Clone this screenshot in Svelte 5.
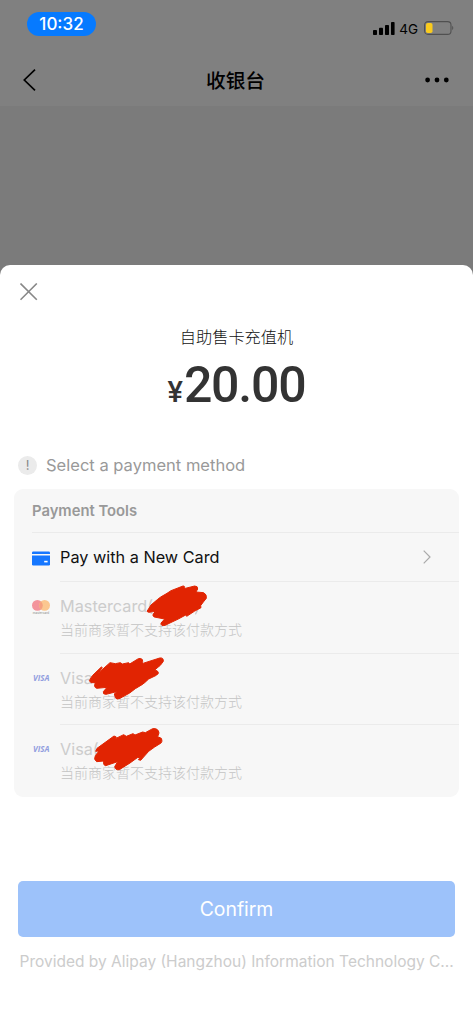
<script lang="ts">
	type Method = {
		brand: 'mastercard' | 'visa';
		name: string;
		mark: string;
	};

	const notice = '当前商家暂不支持该付款方式';

	// Scribbles share a 720x240 canvas drawn at a third of its size
	const methods: Method[] = [
		{
			brand: 'mastercard',
			name: 'Mastercard(',
			mark: 'M381 94 L393 75 L413 58 L422 51 L441 40 L453 32 L489 18 Q497 18 492 26 L524 18 Q534 18 533 27 L528 36 L551 38 Q561 43 559 55 L550 66 L542 77 L543 83 L523 94 L500 109 L497 105 L475 117 L435 136 Q422 139 423 129 L434 117 L403 111 Q396 108 400 101 L407 94 L386 97 Z',
		},
		{
			brand: 'visa',
			name: 'Visa(',
			mark: 'M208 92 L217 77 L244 51 L247 53 L233 72 L252 54 L270 38 L286 41 L301 38 L307 42 L326 38 L329 42 L355 26 Q368 23 368 34 L366 41 L419 24 Q431 22 430 34 L421 46 L405 59 L414 65 Q418 70 409 76 L386 87 L374 98 L366 104 L346 116 L329 129 L300 145 Q289 150 286 143 L283 132 L290 125 L258 133 Q248 133 250 125 L261 112 L230 115 Q220 111 226 98 L213 98 Z',
		},
		{
			brand: 'visa',
			name: 'Visa(',
			mark: 'M227 94 L231 85 L282 48 L289 51 L286 56 L311 44 L319 49 L339 41 L345 45 L368 36 L376 38 L398 26 Q415 24 417 39 L413 50 L424 55 Q429 67 420 71 L404 81 L386 94 L362 121 L355 119 L361 112 L352 113 L330 129 L298 149 Q286 151 284 140 L293 125 L257 137 Q249 136 251 123 L230 125 Q220 119 226 107 L237 93 Z',
		},
	];
</script>

<div class="screen">
	<div class="status-bar">
		<span class="clock">10:32</span>
		<div class="indicators">
			<svg width="22" height="13" viewBox="0 0 22 13">
				<rect x="0" y="8" width="4" height="5" rx="0.8" />
				<rect x="6" y="5.8" width="4" height="7.2" rx="0.8" />
				<rect x="12" y="3" width="4" height="10" rx="0.8" />
				<rect x="18" y="0" width="3.6" height="13" rx="0.8" />
			</svg>
			<span class="network">4G</span>
			<svg width="30" height="14" viewBox="0 0 30 14">
				<rect x="0.6" y="0.6" width="26.4" height="12.8" rx="3.4" fill="none" stroke="#505050" stroke-width="1.1" />
				<rect x="2" y="2" width="6.5" height="10" rx="1.8" fill="#facb1d" />
				<path d="M28.2 4.8 Q30.4 7 28.2 9.2 Z" fill="#505050" />
			</svg>
		</div>
	</div>

	<header class="nav">
		<svg class="back" width="14" height="22" viewBox="0 0 14 22" fill="none">
			<path d="M12 0.7 L1.3 11 L12 21.3" stroke="#000" stroke-width="1.7" />
		</svg>
		<h1>收银台</h1>
		<svg class="more" width="24" height="6" viewBox="0 0 24 6">
			<circle cx="2.6" cy="3" r="2.4" />
			<circle cx="12" cy="3" r="2.4" />
			<circle cx="21.3" cy="3" r="2.4" />
		</svg>
	</header>

	<main class="sheet">
		<svg class="close" width="18" height="18" viewBox="0 0 18 18" fill="none">
			<path d="M0.5 0.5 L16.8 16.8 M16.8 0.5 L0.5 16.8" stroke="#888" stroke-width="1.6" />
		</svg>

		<p class="merchant">自助售卡充值机</p>
		<p class="amount"><span class="currency">¥</span><span class="digits">20.00</span></p>

		<div class="hint">
			<span class="hint-icon">!</span>
			<span>Select a payment method</span>
		</div>

		<section class="tools">
			<h2>Payment Tools</h2>

			<div class="row new-card">
				<svg class="icon" width="18" height="15" viewBox="0 0 18 15">
					<path d="M0 3 V1.6 Q0 0.4 1.2 0.4 H16.8 Q18 0.4 18 1.6 V3 Z" fill="#1677ff" />
					<path d="M0 4.6 H18 V13.2 Q18 14.4 16.8 14.4 H1.2 Q0 14.4 0 13.2 Z" fill="#1677ff" />
					<rect x="12.2" y="9.8" width="3.4" height="1.6" fill="#fff" />
				</svg>
				<div class="body">
					<span class="name">Pay with a New Card</span>
					<svg class="chevron" width="8" height="14" viewBox="0 0 8 14" fill="none">
						<path d="M0.7 0.7 L7 7 L0.7 13.3" stroke="#aaa" stroke-width="1.2" />
					</svg>
				</div>
			</div>

			{#each methods as method}
				<div class="row disabled">
					{#if method.brand === 'mastercard'}
						<svg class="icon logo" width="18" height="16" viewBox="0 0 18 16">
							<circle cx="5.4" cy="5.4" r="5.4" fill="#f3949c" />
							<circle cx="12.6" cy="5.4" r="5.4" fill="#fbc790" />
							<path d="M9 1.4 A5.4 5.4 0 0 1 9 9.4 A5.4 5.4 0 0 1 9 1.4 Z" fill="#f5a080" />
							<text x="0.8" y="14" class="wordmark" textLength="16.4" lengthAdjust="spacingAndGlyphs">mastercard</text>
						</svg>
					{:else}
						<svg class="icon logo" width="18" height="16" viewBox="0 0 18 16">
							<text x="1" y="9.4" class="visa" textLength="16.4" lengthAdjust="spacingAndGlyphs">VISA</text>
						</svg>
					{/if}
					<div class="body">
						<span class="name">{method.name}</span>
						<span class="notice">{notice}</span>
					</div>
					<svg class="scribble" width="240" height="80" viewBox="0 0 720 240">
						{#if method.brand === 'mastercard'}
							<path d="M535 78 Q534 92 526 103" fill="none" stroke="#ccc" stroke-width="4" />
						{/if}
						<path d={method.mark} fill="#e12402" stroke="#e12402" stroke-width="3" stroke-linejoin="round" />
					</svg>
				</div>
			{/each}
		</section>

		<button class="confirm" disabled>Confirm</button>
		<p class="provider">Provided by Alipay (Hangzhou) Information Technology C...</p>
	</main>
</div>

<style>
	:global(body) {
		background: #fff;
	}

	.screen {
		width: 473px;
		height: 1024px;
		display: flex;
		flex-direction: column;
		overflow: hidden;
		background: #7b7b7b;
		font-family: Inter, 'Noto Sans CJK SC', sans-serif;
	}

	h1, h2, p {
		margin: 0;
	}

	.status-bar {
		display: flex;
		justify-content: space-between;
		align-items: flex-start;
		height: 54px;
		box-sizing: border-box;
		padding: 12px 19px 0 27px;
		background: #808080;
	}

	.clock {
		width: 69px;
		height: 24px;
		border-radius: 12px;
		background: #067aff;
		color: #fff;
		font-size: 17px;
		font-weight: 500;
		line-height: 25px;
		text-align: center;
	}

	.indicators {
		display: flex;
		align-items: center;
		height: 14px;
		margin-top: 9px;
	}

	.network {
		margin: 1px 6px 0 4px;
		font-size: 13.5px;
		line-height: 14px;
	}

	.nav {
		display: flex;
		justify-content: space-between;
		align-items: center;
		height: 52px;
		padding: 0 24px 0 23px;
		background: #808080;
	}

	.nav h1 {
		padding: 1px 0 0 9px;
		font-size: 19.7px;
		font-weight: 500;
		line-height: 28px;
	}

	.sheet {
		display: flex;
		flex-direction: column;
		flex: 1;
		margin-top: 159px;
		border-radius: 10px 10px 0 0;
		background: #fff;
	}

	.close {
		margin: 18px 0 0 20px;
	}

	.merchant {
		margin-top: 24px;
		color: #111;
		font-size: 16.2px;
		font-weight: 300;
		line-height: 24px;
		text-align: center;
	}

	.amount {
		display: flex;
		justify-content: center;
		align-items: baseline;
		height: 60px;
		margin-top: 6px;
		color: #333;
		font-family: Roboto, sans-serif;
		font-weight: 500;
		line-height: 60px;
	}

	.currency {
		margin-right: 1px;
		font-size: 29px;
	}

	.digits {
		font-size: 50px;
		letter-spacing: -1.2px;
	}

	.hint {
		display: flex;
		align-items: center;
		gap: 9px;
		height: 24px;
		margin: 38px 0 0 18px;
		color: #999;
		font-size: 16.55px;
	}

	.hint-icon {
		width: 19px;
		height: 19px;
		border-radius: 50%;
		background: #ebebeb;
		color: #888;
		font-size: 13px;
		line-height: 19px;
		text-align: center;
	}

	.tools {
		display: flex;
		flex-direction: column;
		height: 308px;
		margin: 12px 14px 0;
		border-radius: 9px;
		background: #f7f7f7;
	}

	.tools h2 {
		height: 43px;
		margin-left: 18px;
		color: #999;
		font-size: 14.8px;
		font-weight: 600;
		line-height: 44px;
	}

	.row {
		position: relative;
		display: flex;
		padding-left: 18px;
	}

	.new-card {
		height: 49px;
		align-items: center;
	}

	.new-card::before {
		content: '';
		position: absolute;
		top: 0;
		left: 18px;
		right: 0;
		height: 1px;
		background: #ebebeb;
	}

	.icon {
		flex: none;
		margin-right: 10px;
	}

	.new-card .icon {
		margin-top: 3px;
	}

	.body {
		flex: 1;
	}

	.new-card .body {
		display: flex;
		justify-content: space-between;
		align-items: center;
		padding-right: 28px;
	}

	.name {
		color: #111;
		font-size: 16.25px;
		line-height: 24px;
	}

	.disabled {
		height: 71.5px;
	}

	.disabled .body {
		display: flex;
		flex-direction: column;
		padding-top: 12px;
		border-top: 1px solid #ebebeb;
	}

	.disabled .name {
		color: #ccc;
	}

	.notice {
		color: #c4c4c4;
		font-size: 14px;
		font-weight: 300;
		line-height: 24px;
	}

	.logo {
		margin-top: 19px;
	}

	.wordmark {
		font-size: 3.4px;
		font-weight: 500;
		fill: #999;
	}

	.visa {
		font-family: 'Open Sans', sans-serif;
		font-size: 8.4px;
		font-weight: 700;
		font-style: italic;
		fill: #929edf;
	}

	.scribble {
		position: absolute;
		top: -1px;
		left: 6px;
		z-index: 1;
	}

	.disabled:nth-of-type(3) .scribble {
		top: -3px;
	}

	.disabled:nth-of-type(4) .scribble {
		top: -4px;
	}

	.confirm {
		height: 56px;
		margin: 84px 18px 0;
		padding: 0;
		border: none;
		border-radius: 5px;
		background: #9dc2fa;
		color: #fff;
		font-family: inherit;
		font-size: 19.4px;
	}

	.provider {
		margin: 13px 0 0 19.5px;
		color: #ccc;
		font-size: 15.5px;
		line-height: 24px;
		white-space: nowrap;
	}
</style>
